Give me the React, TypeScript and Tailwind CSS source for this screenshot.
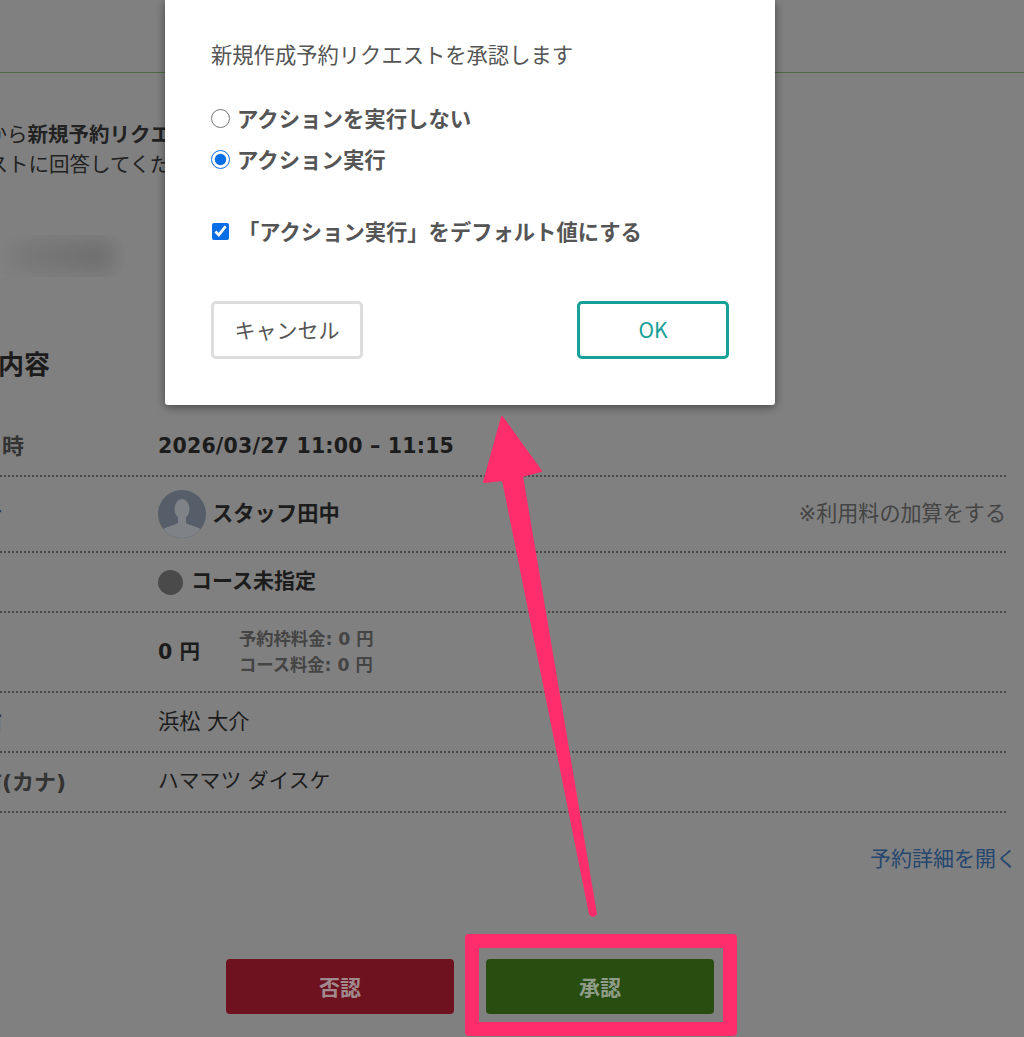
import React from 'react';

const sans = 'font-["DejaVu_Sans","Noto_Sans_CJK_JP",sans-serif]';

const Row = ({ label, height, children, right }: { label: string; height: string; children: React.ReactNode; right?: string }) => (
  <div className={`flex items-center border-b-2 border-dotted border-[#484848] ${height}`}>
    <div className="w-[222px] shrink-0 text-[22px] font-bold text-[#333333] whitespace-nowrap">{label}</div>
    <div className="flex flex-1 items-center">{children}</div>
    {right && <div className="text-[21.1px] text-[#444444]">{right}</div>}
  </div>
);

const Avatar = () => (
  <svg viewBox="0 0 48 48" className="size-12 shrink-0">
    <clipPath id="avatar-clip">
      <circle cx="24" cy="24" r="24" />
    </clipPath>
    <g clipPath="url(#avatar-clip)">
      <rect width="48" height="48" fill="#565e69" />
      <ellipse cx="24" cy="19" rx="7.5" ry="10" fill="#7f8387" />
      <path d="M20 27h8v6c5 3 14 4 17 8v7H3v-7c3-4 12-5 17-8z" fill="#7f8387" />
    </g>
  </svg>
);

const Dialog = () => (
  <div className='absolute left-[165px] top-0 flex h-[405px] w-[610px] flex-col rounded-b-[3px] bg-white px-[46px] pt-[39px] font-["Noto_Sans_CJK_JP",sans-serif] text-[#555555] shadow-[0_2px_10px_rgba(0,0,0,0.45)]'>
    <p className="whitespace-nowrap text-[21.3px] leading-[29px]">新規作成予約リクエストを承認します</p>
    <div className="mt-[34px] flex flex-col gap-[9px]">
      <label className="flex h-[32px] items-center gap-[7px] text-[21.4px] font-bold">
        <input type="radio" name="action" readOnly className="m-0 size-[19px] accent-[#0a6ee6]" />
        アクションを実行しない
      </label>
      <label className="flex h-[32px] items-center gap-[7px] text-[21.4px] font-bold">
        <input type="radio" name="action" readOnly checked className="m-0 size-[19px] accent-[#0a6ee6]" />
        アクション実行
      </label>
    </div>
    <label className="mt-[40px] flex h-[32px] items-center gap-[2px] pl-[1px] text-[21.3px] font-bold">
      <input type="checkbox" readOnly checked className="m-0 size-[17px] accent-[#0a6ee6]" />
      <span className="ml-[7px] whitespace-nowrap">「アクション実行」をデフォルト値にする</span>
    </label>
    <div className="mt-[54px] flex justify-between">
      <button className="h-[58px] w-[152px] rounded-[5px] border-[3px] border-[#dddddd] text-[21px]">キャンセル</button>
      <button className="h-[58px] w-[152px] rounded-[5px] border-[3px] border-[#17a097] text-[21px] text-[#17a097]">OK</button>
    </div>
  </div>
);

const Annotation = () => (
  <>
    <svg viewBox="0 0 1024 1037" className="pointer-events-none absolute inset-0 size-full">
      <path
        d="M502 417 L541 471 L522 476 L596 914 Q593 918 590 914 L503 480 L484 482 Z"
        fill="#ff2d6b"
        stroke="#ff2d6b"
        strokeWidth="2"
        strokeLinejoin="round"
      />
    </svg>
    <div className="absolute left-[465px] top-[934px] h-[102px] w-[272px] rounded-[4px] border-[14px] border-[#ff2d6b]" />
  </>
);

export default function App() {
  return (
    <div className={`relative h-[1037px] w-[1024px] overflow-hidden bg-[#808080] text-[#1c1c1c] ${sans}`}>
      <div className="h-[73px] border-b border-[#4f6b3f]" />

      <div className="ml-[-75px] mt-[45px] whitespace-nowrap font-['Noto_Sans_CJK_JP',sans-serif] text-[20.5px] leading-[30px] text-[#222222]">
        <p>
          お客様から<b>新規予約リクエストが届いています</b>
        </p>
        <p className="ml-[1px]">リクエストに回答してください</p>
      </div>

      <div className="mt-[57px] h-[42px] w-[125px] overflow-hidden bg-[#838383]">
        <div className="ml-[4px] mt-[4px] h-[34px] w-[112px] rounded-[14px] bg-linear-to-r from-[#7a7a7a] to-[#6a6a6a] blur-md" />
      </div>

      <h2 className="ml-[-54px] mt-[68px] font-['Noto_Sans_CJK_JP',sans-serif] text-[26px] font-bold leading-[36px]">予約内容</h2>

      <div className="ml-[-64px] mr-[18px] mt-[36px]">
        <Row label="予約日時" height="h-[60px]">
          <span className="text-[20.5px] font-bold tracking-[0.2px]">2026/03/27 11:00 – 11:15</span>
        </Row>
        <Row label="担当者" height="h-[76px]" right="※利用料の加算をする">
          <Avatar />
          <span className="ml-[6px] text-[21.3px] font-bold">スタッフ田中</span>
        </Row>
        <Row label="コース" height="h-[60px]">
          <span className="size-[25px] rounded-full bg-[#4a4a4a]" />
          <span className="ml-[8px] text-[21px] font-bold">コース未指定</span>
        </Row>
        <Row label="料金" height="h-[80px]">
          <span className="w-[81px] text-[20.5px] font-bold">0 円</span>
          <div className="text-[17.3px] font-bold leading-[26px] text-[#444444]">
            <p>予約枠料金: 0 円</p>
            <p>コース料金: 0 円</p>
          </div>
        </Row>
        <Row label="お名前" height="h-[60px]">
          <span className="text-[21.2px]">浜松 大介</span>
        </Row>
        <Row label="お名前(カナ)" height="h-[60px]">
          <span className="text-[20.8px]">ハママツ ダイスケ</span>
        </Row>
      </div>

      <div className="mt-[31px] pr-[7px] text-right text-[21px] leading-[30px] text-[#24466f]">予約詳細を開く</div>

      <div className="ml-[226px] mt-[85px] flex gap-[32px] font-['Noto_Sans_CJK_JP',sans-serif] text-[21px] font-bold">
        <button className="h-[55px] w-[228px] rounded-[4px] bg-[#6f1220] text-[#a08a8e]">否認</button>
        <button className="h-[55px] w-[228px] rounded-[4px] bg-[#284d10] text-[#8f9c88]">承認</button>
      </div>

      <Dialog />
      <Annotation />
    </div>
  );
}
